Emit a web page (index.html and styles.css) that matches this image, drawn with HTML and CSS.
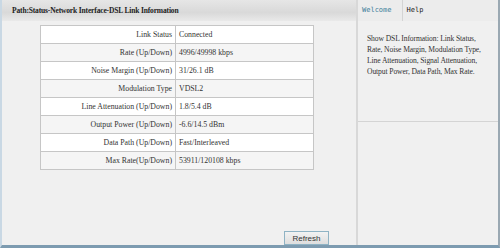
FILE: index.html
```html
<!DOCTYPE html>
<html lang="en">
<head>
    <meta charset="UTF-8">
    <title>DSL Link Information</title>
    <link rel="stylesheet" href="styles.css">
</head>
<body>
    <div class="frame">
        <div class="main">
            <div class="path">Path:Status-Network Interface-DSL Link Information</div>
            <table class="info">
                <tr><td class="lbl">Link Status</td><td>Connected</td></tr>
                <tr><td class="lbl">Rate (Up/Down)</td><td>4996/49998 kbps</td></tr>
                <tr><td class="lbl">Noise Margin (Up/Down)</td><td>31/26.1 dB</td></tr>
                <tr><td class="lbl">Modulation Type</td><td>VDSL2</td></tr>
                <tr><td class="lbl">Line Attenuation (Up/Down)</td><td>1.8/5.4 dB</td></tr>
                <tr><td class="lbl">Output Power (Up/Down)</td><td>-6.6/14.5 dBm</td></tr>
                <tr><td class="lbl">Data Path (Up/Down)</td><td>Fast/Interleaved</td></tr>
                <tr><td class="lbl">Max Rate(Up/Down)</td><td>53911/120108 kbps</td></tr>
            </table>
            <div class="actions">
                <button class="btn">Refresh</button>
            </div>
        </div>
        <div class="side">
            <div class="tabs">
                <span class="tab active">Welcome</span>
                <span class="tab">Help</span>
            </div>
            <div class="help">
                Show DSL Information: Link Status, Rate, Noise Margin, Modulation Type, Line Attenuation, Signal Attenuation, Output Power, Data Path, Max Rate.
            </div>
        </div>
    </div>
</body>
</html>
```

FILE: styles.css
```css
html, body {
    margin: 0;
    padding: 0;
}
body {
    width: 500px;
    height: 248px;
    background-color: #f0f0f0;
    font-family: "Liberation Serif", "Times New Roman", serif;
    color: #333;
    overflow: hidden;
}
.frame {
    display: flex;
    box-sizing: border-box;
    height: 248px;
    border-left: 2px solid #c9d8e4;
    border-right: 2px solid #9aa8b2;
    border-bottom: 3px solid #7d9bb0;
}
.main {
    width: 354px;
    display: flex;
    flex-direction: column;
}
.path {
    height: 21px;
    line-height: 21px;
    padding-left: 10px;
    font-size: 7.5px;
    letter-spacing: -0.15px;
    font-weight: bold;
    color: #222;
    background: linear-gradient(#e6e6e6, #d9d9d9 60%, #e9e9e9);
}
.info {
    margin: 4px 0 0 38px;
    width: 274px;
    border-collapse: collapse;
    border: 1px solid #b8b8b8;
    font-size: 7.8px;
}
.info td {
    height: 17px;
    padding: 0 3px;
    border: 1px solid #c6c6c6;
    background-color: #fff;
    white-space: nowrap;
}
.info tr:nth-child(even) td {
    background-color: #f5f5f5;
}
.info td.lbl {
    width: 128px;
    text-align: right;
}
.actions {
    margin-top: auto;
    display: flex;
    justify-content: flex-end;
    padding: 0 27px 0 0;
}
.btn {
    width: 45px;
    height: 14px;
    padding: 0;
    font-family: "Liberation Sans", Arial, sans-serif;
    font-size: 8px;
    color: #333;
    background: linear-gradient(#f2f2f2, #dedede);
    border: 1px solid #8fb3c4;
}
.side {
    flex: 1;
    display: flex;
    flex-direction: column;
    border-left: 2px solid #d8d8d8;
}
.tabs {
    display: flex;
    height: 21px;
    background-color: #ececec;
}
.tab {
    display: block;
    line-height: 21px;
    padding: 0 8px 0 4px;
    font-family: "DejaVu Sans Mono", "Liberation Mono", monospace;
    font-size: 7px;
    color: #222;
}
.tab.active {
    color: #3b7e9a;
    border-right: 1px solid #d4d4d4;
    padding-right: 10px;
}
.help {
    height: 88px;
    padding: 12px 12px 0 9px;
    font-size: 7.6px;
    letter-spacing: -0.1px;
    line-height: 11px;
    border-bottom: 1px solid #d4d4d4;
}
```
